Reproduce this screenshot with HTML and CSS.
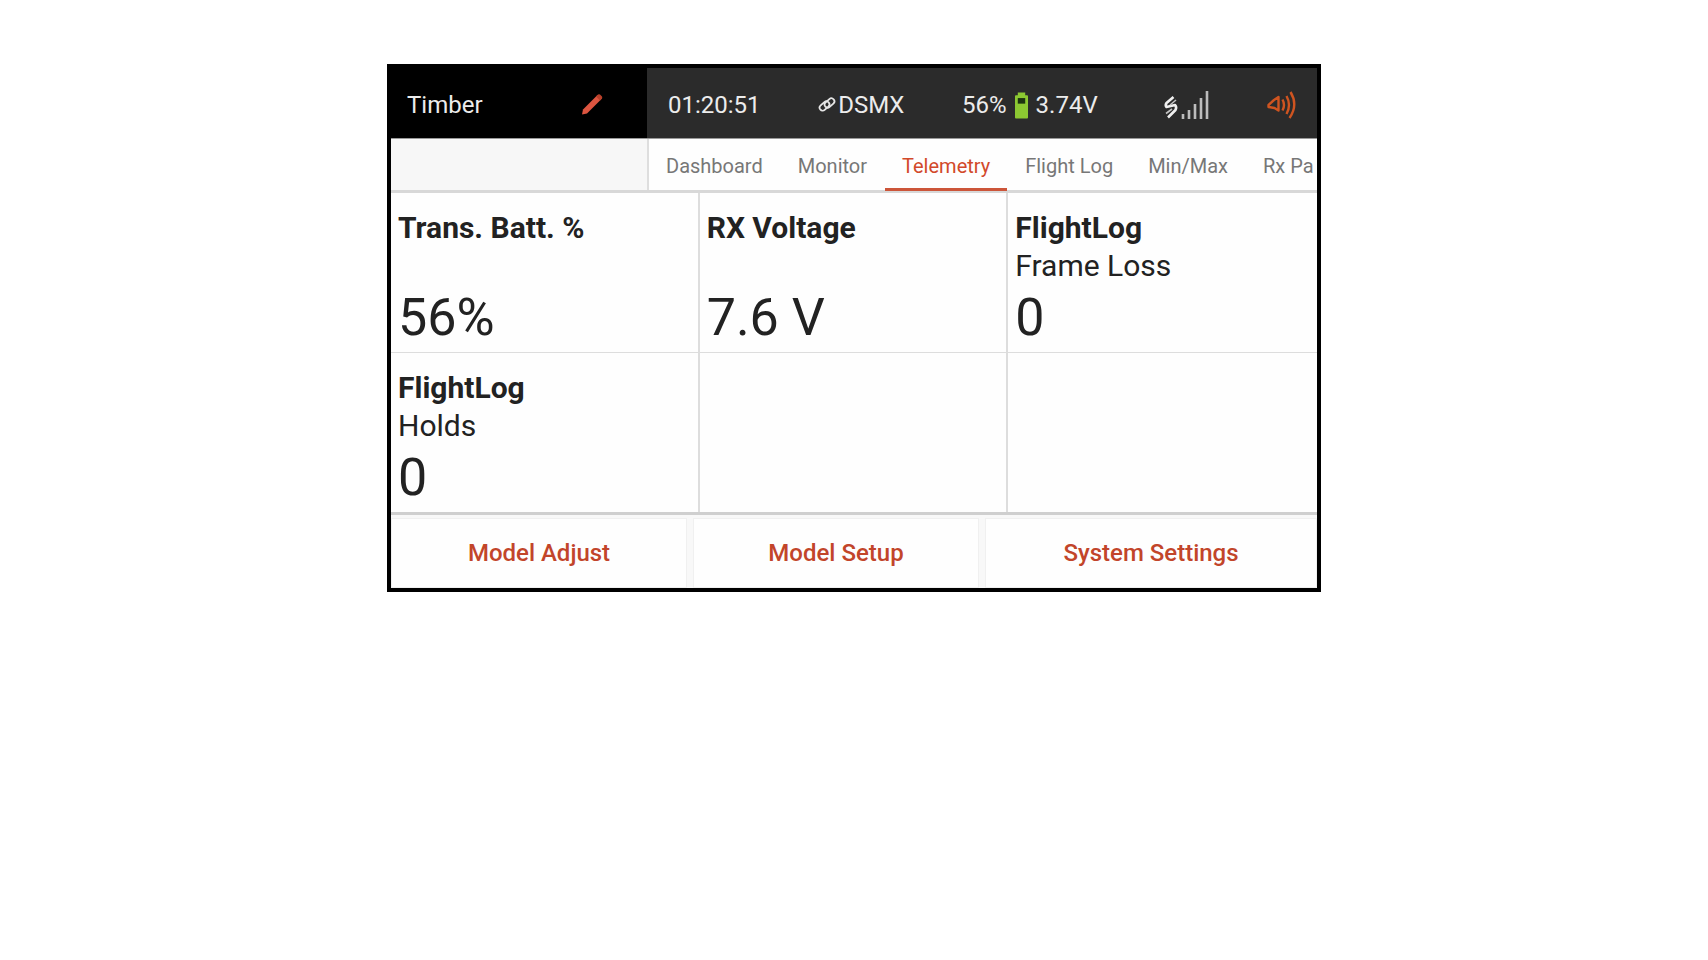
FILE: index.html
```html
<!DOCTYPE html>
<html lang="en">
<head>
  <meta charset="UTF-8" />
  <meta name="viewport" content="width=device-width, initial-scale=1.0" />
  <title>Timber - Telemetry</title>
  <link rel="stylesheet" href="styles.css">
</head>
<body>
  <main class="screen">
    <header class="topbar">
      <div class="model">
        <span>Timber</span>
        <button class="icon-btn" type="button" aria-label="Edit model name">
          <svg width="22" height="24" viewBox="0 0 22 24"><path d="M1 21.500l1-5L16 2.500q1-1 2 0l2 2q1 1 0 2L6 20.500z" fill="#dd5540"/><path d="M15 3.500L17 1.500q1-.5 2 0l2 2q.5 1 0 2L19 7.500z" fill="#b8402a"/></svg>
        </button>
      </div>
      <div class="status">
        <span>01:20:51</span>
        <span class="status-item">
          <svg width="18" height="18" viewBox="0 0 18 18" fill="none" stroke="#e6e6e6" stroke-width="1.800" stroke-linecap="round"><rect x="1" y="7" width="11" height="6" rx="3" transform="rotate(-42 6.500 10)"/><rect x="6" y="4" width="11" height="6" rx="3" transform="rotate(-42 11.500 7)"/></svg>DSMX
        </span>
        <span class="status-item battery">56%
          <svg width="13" height="27" viewBox="0 0 14 28"><path d="M3 0h8v3h2a1 1 0 0 1 1 1v23a1 1 0 0 1-1 1H1a1 1 0 0 1-1-1V4a1 1 0 0 1 1-1h2z" fill="#8cc832"/><path d="M3 6h8v6H3z" fill="#1d3310"/></svg>
          3.74V
        </span>
        <svg class="signal" width="46" height="30" viewBox="0 0 46 30" role="img" aria-label="Signal"><path d="M10.500 7L3.500 13Q2 15.500 3.500 17L12 15Q14 17 12.500 20L5 27.500" fill="none" stroke="#f0f0f0" stroke-width="2.600" stroke-linejoin="round"/><path d="M13 10L7 15M9 19L3 23.500" stroke="#c4c4c4" stroke-width="1.600"/><path d="M20 24v5M26 20v9M32 14v15M38 8v21M44 1v28" stroke="#bcbcbc" stroke-width="2.600"/></svg>
        <button class="icon-btn" type="button" aria-label="Sound">
          <svg width="30" height="30" viewBox="0 0 30 30" fill="none" stroke="#cf5420" stroke-width="2.400" stroke-linejoin="round"><path d="M11.500 7v13.500l-4-2.500-6-1v-2L7 10z"/><path d="M15.500 9.500q3 5.500 0 11M19.500 6q5 9 0 18M23.500 2q8 13-1 26"/></svg>
        </button>
      </div>
    </header>

    <div class="tabbar">
      <div class="tab-spacer"></div>
      <nav class="tabs">
        <a href="#dashboard">Dashboard</a>
        <a href="#monitor">Monitor</a>
        <a href="#telemetry" class="active">Telemetry</a>
        <a href="#flightlog">Flight Log</a>
        <a href="#minmax">Min/Max</a>
        <a href="#rxpa">Rx Pa</a>
      </nav>
    </div>

    <section class="grid">
      <div class="cell">
        <h2>Trans. Batt. %</h2>
        <p class="sub"></p>
        <p class="value">56%</p>
      </div>
      <div class="cell">
        <h2>RX Voltage</h2>
        <p class="sub"></p>
        <p class="value">7.6 V</p>
      </div>
      <div class="cell">
        <h2>FlightLog</h2>
        <p class="sub">Frame Loss</p>
        <p class="value">0</p>
      </div>
      <div class="cell">
        <h2>FlightLog</h2>
        <p class="sub">Holds</p>
        <p class="value">0</p>
      </div>
      <div class="cell"></div>
      <div class="cell"></div>
    </section>

    <footer class="actions">
      <button type="button">Model Adjust</button>
      <button type="button">Model Setup</button>
      <button type="button">System Settings</button>
    </footer>
  </main>
</body>
</html>
```

FILE: styles.css
```css
* {
  box-sizing: border-box;
}
body {
  margin: 0;
  padding: 64px 16px;
  font-family: Roboto, sans-serif;
  background: #fff;
  color: #222;
}
.screen {
  max-width: 934px;
  margin: 0 auto;
  border: 4px solid #000;
  background: #fefefe;
  overflow: hidden;
}
.topbar {
  display: flex;
  background: #2b2b2b;
  color: #ececec;
  font-size: 24px;
  line-height: 28px;
}
.model {
  flex: 0 0 256px;
  display: flex;
  align-items: center;
  justify-content: space-between;
  padding: 4px 44px 0 16px;
  background: #000;
}
.status {
  flex: 1;
  display: flex;
  align-items: center;
  justify-content: space-between;
  padding: 22px 20px 18px 21px;
}
.status-item {
  display: flex;
  align-items: center;
  gap: 2px;
}
.battery {
  gap: 8px;
}
.signal {
  display: block;
  margin-left: 8px;
}
.icon-btn {
  display: flex;
  padding: 0;
  border: none;
  background: none;
  cursor: pointer;
}
.tabbar {
  display: flex;
  border-top: 1px solid #999;
  border-bottom: 3px solid #d8d8d8;
}
.tab-spacer {
  flex: 0 0 258px;
  background: #f7f7f7;
  border-right: 2px solid #dedede;
}
.tabs {
  flex: 1;
  display: flex;
  gap: 1px;
  min-width: 0;
  margin-bottom: -1px;
}
.tabs a {
  flex: none;
  padding: 14px 17px 9px;
  border-bottom: 3px solid transparent;
  color: #777;
  font-size: 20px;
  line-height: 26px;
  text-decoration: none;
  white-space: nowrap;
}
.tabs .active {
  color: #d2492a;
  border-color: #cc5539;
}
.grid {
  display: grid;
  grid-template-columns: repeat(3, 1fr);
  border-bottom: 3px solid #cfcfcf;
}
.cell {
  padding: 16px 7px 3px;
  border-right: 2px solid #ddd;
  border-bottom: 1px solid #ddd;
}
.cell:nth-child(3n) {
  border-right: none;
}
.cell:nth-child(n+4) {
  border-bottom: none;
}
.cell h2,
.cell p {
  margin: 0;
}
.cell h2 {
  font-size: 30px;
  font-weight: 700;
  line-height: 38px;
}
.cell .sub {
  min-height: 38px;
  font-size: 30px;
  line-height: 38px;
}
.cell .value {
  font-size: 52px;
  line-height: 66px;
  margin-bottom: -2px;
}
.actions {
  display: grid;
  grid-template-columns: 296fr 286fr 332fr;
  gap: 6px;
  background: #f8f8f8;
  padding-top: 3px;
}
.actions button {
  padding: 20px 0;
  border: 1px solid #f0f0f0;
  background: #fefefe;
  color: #c2452a;
  font-family: inherit;
  font-size: 24px;
  font-weight: 500;
  line-height: 28px;
  cursor: pointer;
}
```
